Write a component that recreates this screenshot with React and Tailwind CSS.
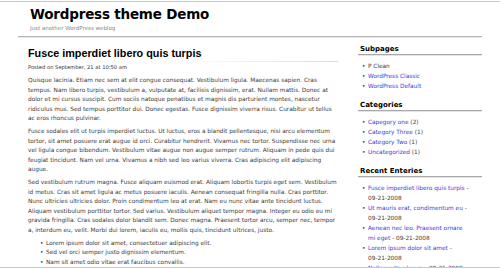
import React from 'react'

const para1 = [
  'Quisque lacinia. Etiam nec sem at elit congue consequat. Vestibulum ligula. Maecenas sapien. Cras',
  'tempus. Nam libero turpis, vestibulum a, vulputate at, facilisis dignissim, erat. Nullam mattis. Donec at',
  'dolor et mi cursus suscipit. Cum sociis natoque penatibus et magnis dis parturient montes, nascetur',
  'ridiculus mus. Sed tempus porttitor dui. Donec egestas. Fusce dignissim viverra risus. Curabitur ut tellus',
  'ac eros rhoncus pulvinar.',
]

const para2 = [
  'Fusce sodales elit ut turpis imperdiet luctus. Ut luctus, eros a blandit pellentesque, nisi arcu elementum',
  'tortor, sit amet posuere erat augue id orci. Curabitur hendrerit. Vivamus nec tortor. Suspendisse nec urna',
  'vel ligula congue bibendum. Vestibulum vitae augue non augue semper rutrum. Aliquam in pede quis dui',
  'feugiat tincidunt. Nam vel urna. Vivamus a nibh sed leo varius viverra. Cras adipiscing elit adipiscing',
  'augue.',
]

const para3 = [
  'Sed vestibulum rutrum magna. Fusce aliquam euismod erat. Aliquam lobortis turpis eget sem. Vestibulum',
  'id metus. Cras sit amet ligula ac metus posuere iaculis. Aenean consequat fringilla nulla. Cras porttitor.',
  'Nunc ultricies ultricies dolor. Proin condimentum leo at erat. Nam eu nunc vitae ante tincidunt luctus.',
  'Aliquam vestibulum porttitor tortor. Sed varius. Vestibulum aliquet tempor magna. Integer eu odio eu mi',
  'gravida fringilla. Cras sodales dolor blandit sem. Donec magna. Praesent tortor arcu, semper nec, tempor',
  'a, interdum eu, velit. Morbi dui lorem, iaculis eu, mollis quis, tincidunt ultrices, justo.',
]

const bullets = [
  'Lorem ipsum dolor sit amet, consectetuer adipiscing elit.',
  'Sed vel orci semper justo dignissim elementum.',
  'Nam sit amet odio vitae erat faucibus convallis.',
  'Sed mattis massa sed purus.',
]

function Para({ lines }) {
  return (
    <p className="mb-[3px]">
      {lines.map((l, i) => (
        <span key={i} className="block whitespace-nowrap">{l}</span>
      ))}
    </p>
  )
}

function WidgetTitle({ children }) {
  return (
    <div className="mb-[5px]">
      <h3 className="pl-[2px] text-[7px] leading-[10px] font-bold text-black">{children}</h3>
      <div className="h-[2px] bg-[#a8a8a8] border-b border-[#e4e4e4]" />
    </div>
  )
}

function Item({ children }) {
  return (
    <li className="flex">
      <span className="w-[10px] pl-[4px] shrink-0">•</span>
      <span>{children}</span>
    </li>
  )
}

export default function App() {
  return (
    <div className="w-[500px] h-[269px] overflow-hidden bg-white font-['DejaVu_Sans',sans-serif] text-[#3a3a3a]">
      <div className="h-[267px] overflow-hidden border-t border-b border-[#c8c8c8] mt-px">
        {/* cabeçalho */}
        <div className="pl-[30px] pt-[3px]">
          <h1 className="text-[13.5px] leading-[18px] font-bold text-black tracking-[-0.2px]">Wordpress theme Demo</h1>
          <p className="text-[5.5px] leading-[8px] text-[#8a8a8a] mt-[1px]">Just another WordPress weblog</p>
        </div>
        <div className="mx-[18px] mt-[4px] h-[2px] bg-[#b5b5b5] border-b border-[#e8e8e8]" />

        <div className="flex pt-[8px]">
          {/* post */}
          <div className="ml-[28px] w-[310px] text-[5.8px] leading-[9.6px]">
            <h2 className="font-['Liberation_Sans',sans-serif] text-[10.8px] leading-[14px] font-semibold text-black">
              Fusce imperdiet libero quis turpis
            </h2>
            <div className="h-px mt-[1px] bg-gradient-to-r from-white via-white to-[#dcdcdc]" />
            <p className="text-[5.2px] leading-[9px] text-[#333] mt-[1px] mb-[4px]">Posted on September, 21 at 10:50 am</p>
            <Para lines={para1} />
            <Para lines={para2} />
            <Para lines={para3} />
            <ul className="pl-[8px] mt-[3px]">
              {bullets.map((b, i) => (
                <Item key={i}>{b}</Item>
              ))}
            </ul>
          </div>

          {/* sidebar */}
          <div className="ml-[20px] -mt-[2px] w-[124px] text-[5.8px] leading-[10px]">
            <WidgetTitle>Subpages</WidgetTitle>
            <ul className="mb-[9px]">
              <Item>P Clean</Item>
              <Item><span className="text-[#3b3bd6]">WordPress Classic</span></Item>
              <Item><span className="text-[#3b3bd6]">WordPress Default</span></Item>
            </ul>
            <WidgetTitle>Categories</WidgetTitle>
            <ul className="mb-[9px]">
              <Item><span className="text-[#3b3bd6]">Capegory one</span> (2)</Item>
              <Item><span className="text-[#3b3bd6]">Category Three</span> (1)</Item>
              <Item><span className="text-[#3b3bd6]">Category Two</span> (1)</Item>
              <Item><span className="text-[#3b3bd6]">Uncategorized</span> (1)</Item>
            </ul>
            <WidgetTitle>Recent Enteries</WidgetTitle>
            <ul>
              <Item><span className="text-[#3b3bd6]">Fusce imperdiet libero quis turpis</span> -<br />09-21-2008</Item>
              <Item><span className="text-[#3b3bd6]">Ut mauris erat, condimentum eu</span> -<br />09-21-2008</Item>
              <Item><span className="text-[#3b3bd6]">Aenean nec leo. Praesent ornare<br />mi eget</span> - 09-21-2008</Item>
              <Item><span className="text-[#3b3bd6]">Lorem ipsum dolor sit amet</span> -<br />09-21-2008</Item>
              <Item><span className="text-[#3b3bd6]">Nullam vitae lorem</span> - 09-21-2008</Item>
            </ul>
          </div>
        </div>
      </div>
    </div>
  )
}
